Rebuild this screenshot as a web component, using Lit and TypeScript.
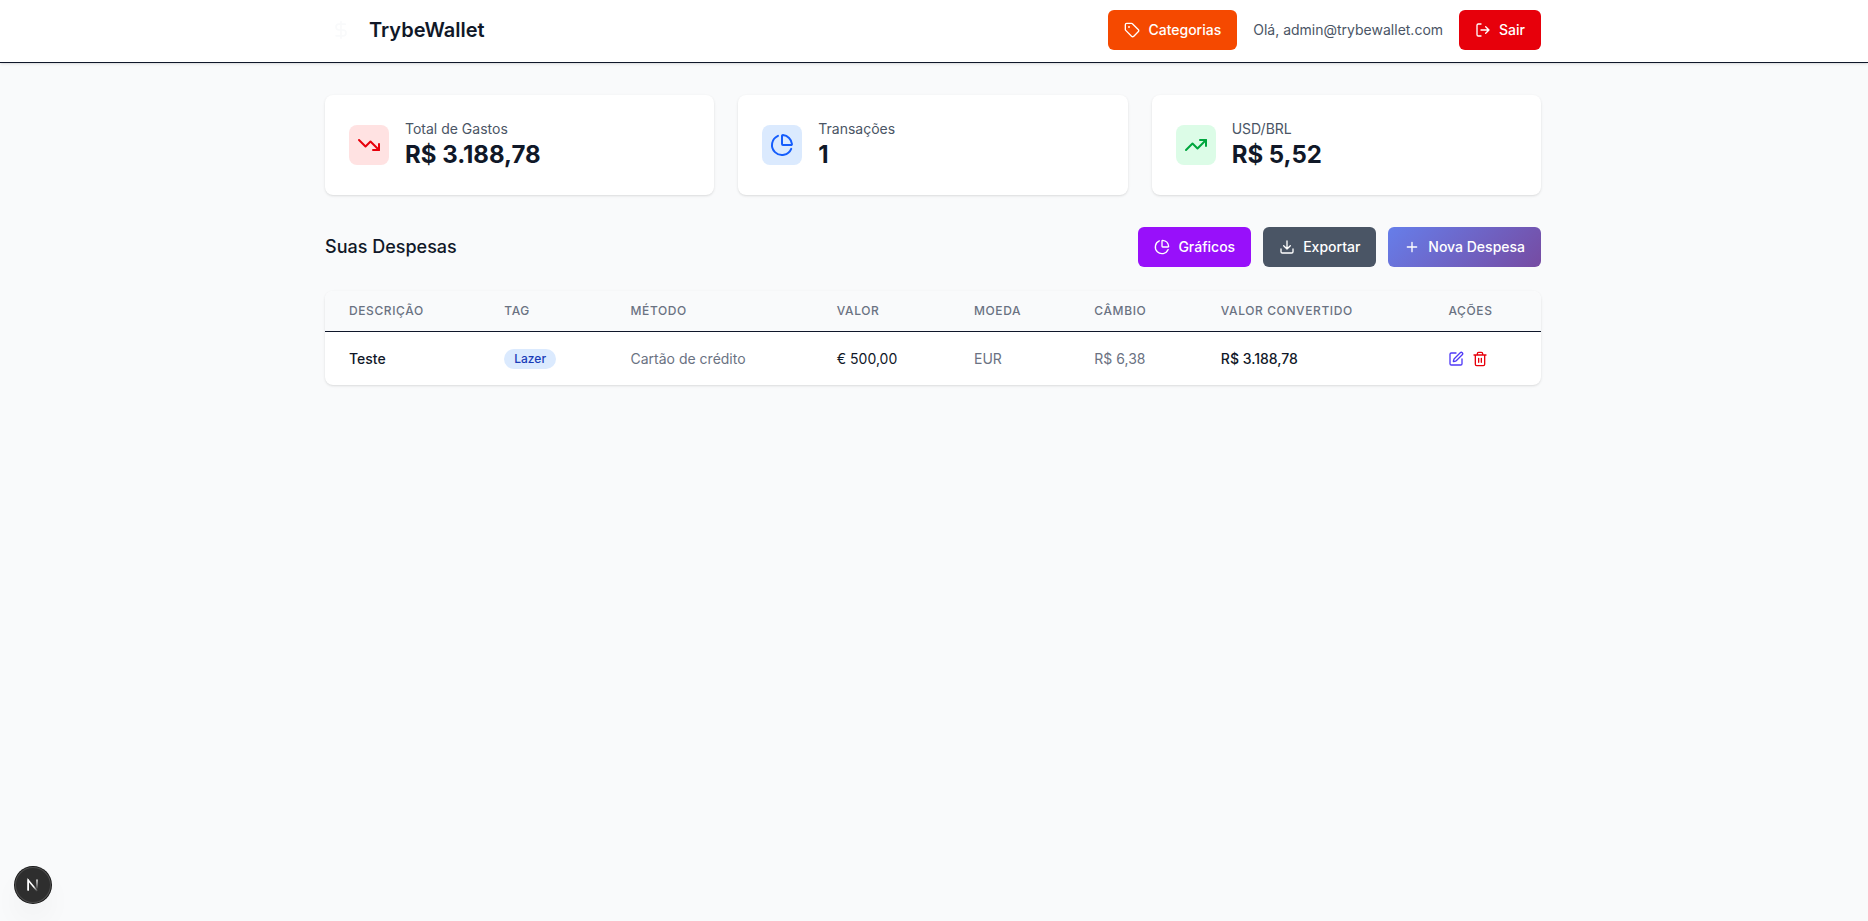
import { LitElement, html, css, svg } from "lit";
import { customElement, property } from "lit/decorators.js";

const icons: Record<string, unknown> = {
  dollar: svg`<path d="M12 2v20M17 5H9.500a3.500 3.500 0 0 0 0 7h5a3.500 3.500 0 0 1 0 7H6"/>`,
  tag: svg`<path d="M12.586 2.586A2 2 0 0 0 11.172 2H4a2 2 0 0 0-2 2v7.172a2 2 0 0 0 .586 1.414l8.704 8.704a2.426 2.426 0 0 0 3.420 0l6.580-6.580a2.426 2.426 0 0 0 0-3.420z"/><circle cx="7.500" cy="7.500" r=".5" fill="currentColor"/>`,
  logout: svg`<path d="m16 17 5-5-5-5M21 12H9M9 21H5a2 2 0 0 1-2-2V5a2 2 0 0 1 2-2h4"/>`,
  down: svg`<path d="M16 17h6v-6"/><path d="m22 17-8.500-8.500-5 5L2 7"/>`,
  up: svg`<path d="M16 7h6v6"/><path d="m22 7-8.500 8.500-5-5L2 17"/>`,
  pie: svg`<path d="M21 12c.552 0 1.005-.449.950-.998a10 10 0 0 0-8.953-8.951c-.55-.055-.998.398-.998.950v8a1 1 0 0 0 1 1z"/><path d="M21.210 15.890A10 10 0 1 1 8 2.830"/>`,
  download: svg`<path d="M12 15V3M21 15v4a2 2 0 0 1-2 2H5a2 2 0 0 1-2-2v-4M7 10l5 5 5-5"/>`,
  plus: svg`<path d="M5 12h14M12 5v14"/>`,
  edit: svg`<path d="M12 3H5a2 2 0 0 0-2 2v14a2 2 0 0 0 2 2h14a2 2 0 0 0 2-2v-7"/><path d="M18.375 2.625a1 1 0 0 1 3 3l-9.013 9.014a2 2 0 0 1-.853.505l-2.873.840a.5.5 0 0 1-.620-.620l.840-2.873a2 2 0 0 1 .506-.852z"/>`,
  trash: svg`<path d="M3 6h18M19 6v14c0 1-1 2-2 2H7c-1 0-2-1-2-2V6M8 6V4c0-1 1-2 2-2h4c1 0 2 1 2 2v2M10 11v6M14 11v6"/>`,
};

const icon = (name: string, size = 16) => html`<svg width=${size} height=${size} viewBox="0 0 24 24" fill="none"
  stroke="currentColor" stroke-width="2" stroke-linecap="round" stroke-linejoin="round" aria-hidden="true">${icons[name]}</svg>`;

const reset = css`
  *, *::before, *::after { box-sizing: border-box; }
  h1, h2, p { margin: 0; }
  svg { display: block; flex: none; }
  button { font: inherit; border: 0; margin: 0; padding: 0; background: none; cursor: pointer; }
`;

@customElement("stat-card")
export class StatCard extends LitElement {
  @property() label = "";
  @property() value = "";
  @property() icon = "";
  @property({ reflect: true }) tone = "red";

  static styles = [reset, css`
    :host {
      display: flex; align-items: center; gap: 16px; padding: 24px; min-width: 0;
      background: #fff; border-radius: 8px;
      box-shadow: 0 1px 3px rgb(0 0 0 / 0.1), 0 1px 2px -1px rgb(0 0 0 / 0.1);
    }
    .badge { padding: 8px; border-radius: 8px; background: #ffe2e2; color: #e7000b; }
    :host([tone="blue"]) .badge { background: #dbeafe; color: #155dfc; }
    :host([tone="green"]) .badge { background: #dcfce7; color: #00a63e; }
    .label { font-size: 14px; line-height: 20px; color: #4a5565; }
    .value { font-size: 24px; line-height: 32px; font-weight: 700; color: #101828; }
  `];

  render() {
    return html`
      <div class="badge">${icon(this.icon, 24)}</div>
      <div>
        <p class="label">${this.label}</p>
        <p class="value">${this.value}</p>
      </div>`;
  }
}

interface Expense {
  description: string; tag: string; method: string; value: string;
  currency: string; rate: string; converted: string;
}

@customElement("expense-table")
export class ExpenseTable extends LitElement {
  @property({ attribute: false }) rows: Expense[] = [];

  static styles = [reset, css`
    :host {
      display: block; background: #fff; border-radius: 8px; overflow: hidden;
      box-shadow: 0 1px 3px rgb(0 0 0 / 0.1), 0 1px 2px -1px rgb(0 0 0 / 0.1);
    }
    .scroll { overflow-x: auto; }
    table { width: 100%; border-collapse: separate; border-spacing: 0; }
    thead { background: #f9fafb; }
    th {
      padding: 12px 24px; border-bottom: 1px solid #0f172a; text-align: left; font-size: 12px; line-height: 16px; font-weight: 500;
      letter-spacing: 0.05em; text-transform: uppercase; color: #6a7282; white-space: nowrap;
    }
    td { padding: 16px 24px; font-size: 14px; line-height: 20px; color: #6a7282; white-space: nowrap; }
    .strong { font-weight: 500; color: #101828; }
    .amount { color: #101828; }
    .tag {
      display: inline-flex; padding: 2px 10px; border-radius: 10px; font-size: 12px; line-height: 16px;
      font-weight: 500; background: #dbeafe; color: #193cb8;
    }
    .actions { display: flex; gap: 8px; }
    .edit { color: #4f39f6; }
    .remove { color: #e7000b; }
  `];

  render() {
    const heads = ["Descrição", "Tag", "Método", "Valor", "Moeda", "Câmbio", "Valor Convertido", "Ações"];
    return html`<div class="scroll"><table>
      <thead><tr>${heads.map((h) => html`<th scope="col">${h}</th>`)}</tr></thead>
      <tbody>${this.rows.map((r) => html`<tr>
        <td class="strong">${r.description}</td>
        <td><span class="tag">${r.tag}</span></td>
        <td>${r.method}</td>
        <td class="amount">${r.value}</td>
        <td>${r.currency}</td>
        <td>${r.rate}</td>
        <td class="strong">${r.converted}</td>
        <td><div class="actions">
          <button class="edit" type="button" aria-label="Editar">${icon("edit")}</button>
          <button class="remove" type="button" aria-label="Excluir">${icon("trash")}</button>
        </div></td>
      </tr>`)}</tbody>
    </table></div>`;
  }
}

@customElement("app-root")
export class AppRoot extends LitElement {
  private expenses: Expense[] = [{
    description: "Teste", tag: "Lazer", method: "Cartão de crédito", value: "€ 500,00",
    currency: "EUR", rate: "R$ 6,38", converted: "R$ 3.188,78",
  }];

  static styles = [reset, css`
    :host {
      display: block; min-height: 100vh; background: #f9fafb; color: #101828;
      font-family: Inter, "Liberation Sans", sans-serif; font-size: 16px; line-height: 24px;
    }
    .header {
      background: #fff; border-bottom: 1px solid #0f172a;
      box-shadow: 0 1px 3px rgb(0 0 0 / 0.1), 0 1px 2px -1px rgb(0 0 0 / 0.1);
    }
    .container { max-width: 1280px; margin: 0 auto; padding: 0 33px 0 31px; }
    .bar { display: flex; align-items: center; justify-content: space-between; padding-top: 10px; padding-bottom: 12px; }
    .brand { display: flex; align-items: center; gap: 12px; }
    .logo { display: grid; place-items: center; width: 32px; height: 32px; color: #f9fafb; }
    .title { font-size: 20px; line-height: 28px; font-weight: 600; }
    .user { display: flex; align-items: center; gap: 16px; }
    .hello { font-size: 14px; line-height: 20px; color: #4a5565; }
    .btn {
      display: inline-flex; align-items: center; gap: 8px; padding: 10px 16px; border-radius: 6px;
      font-size: 14px; line-height: 20px; font-weight: 500; color: #fff; white-space: nowrap;
    }
    .orange { background: #f54900; }
    .red { background: #e7000b; }
    .purple { background: #9810fa; }
    .gray { background: #4a5565; }
    .gradient { background: linear-gradient(135deg, #667eea 0%, #764ba2 100%); }
    .main { padding-top: 32px; padding-bottom: 32px; }
    .stats { display: grid; grid-template-columns: repeat(3, 1fr); gap: 24px; margin-bottom: 32px; }
    .toolbar { display: flex; align-items: center; justify-content: space-between; margin-bottom: 24px; }
    .section { font-size: 18px; line-height: 28px; font-weight: 500; }
    .tools { display: flex; gap: 12px; }
    .dev {
      position: fixed; left: 15px; bottom: 18px; width: 36px; height: 36px; border-radius: 50%;
      display: grid; place-items: center; background: #2e2e2e;
      box-shadow: 0 0 0 1px #171717, inset 0 0 0 1px #4d4d4d, 0 16px 32px -8px rgb(0 0 0 / 0.12);
    }
  `];

  render() {
    return html`
      <header class="header">
        <div class="container bar">
          <div class="brand">
            <div class="logo">${icon("dollar", 20)}</div>
            <h1 class="title">TrybeWallet</h1>
          </div>
          <div class="user">
            <button class="btn orange" type="button">${icon("tag")}Categorias</button>
            <span class="hello">Olá, admin@trybewallet.com</span>
            <button class="btn red" type="button">${icon("logout")}Sair</button>
          </div>
        </div>
      </header>
      <main class="container main">
        <section class="stats">
          <stat-card icon="down" tone="red" label="Total de Gastos" value="R$ 3.188,78"></stat-card>
          <stat-card icon="pie" tone="blue" label="Transações" value="1"></stat-card>
          <stat-card icon="up" tone="green" label="USD/BRL" value="R$ 5,52"></stat-card>
        </section>
        <div class="toolbar">
          <h2 class="section">Suas Despesas</h2>
          <div class="tools">
            <button class="btn purple" type="button">${icon("pie")}Gráficos</button>
            <button class="btn gray" type="button">${icon("download")}Exportar</button>
            <button class="btn gradient" type="button">${icon("plus")}Nova Despesa</button>
          </div>
        </div>
        <expense-table .rows=${this.expenses}></expense-table>
      </main>
      <button class="dev" type="button" aria-label="Ferramentas">
        <svg width="14" height="14" viewBox="0 0 14 14" fill="none" stroke-width="1.500" aria-hidden="true">
          <defs>
            <linearGradient id="diag" gradientUnits="userSpaceOnUse" x1="8" y1="8" x2="12" y2="13">
              <stop stop-color="#fff"/><stop offset="1" stop-color="#fff" stop-opacity="0"/>
            </linearGradient>
            <linearGradient id="stem" gradientUnits="userSpaceOnUse" x1="11" y1="1" x2="11" y2="12">
              <stop stop-color="#fff"/><stop offset="1" stop-color="#fff" stop-opacity="0"/>
            </linearGradient>
          </defs>
          <path d="M2.200 12.500V2.200L12 14" stroke="url(#diag)"/>
          <path d="M2.200 12.500V1.500" stroke="#fff"/>
          <path d="M11 1.500v9" stroke="url(#stem)"/>
        </svg>
      </button>`;
  }
}
